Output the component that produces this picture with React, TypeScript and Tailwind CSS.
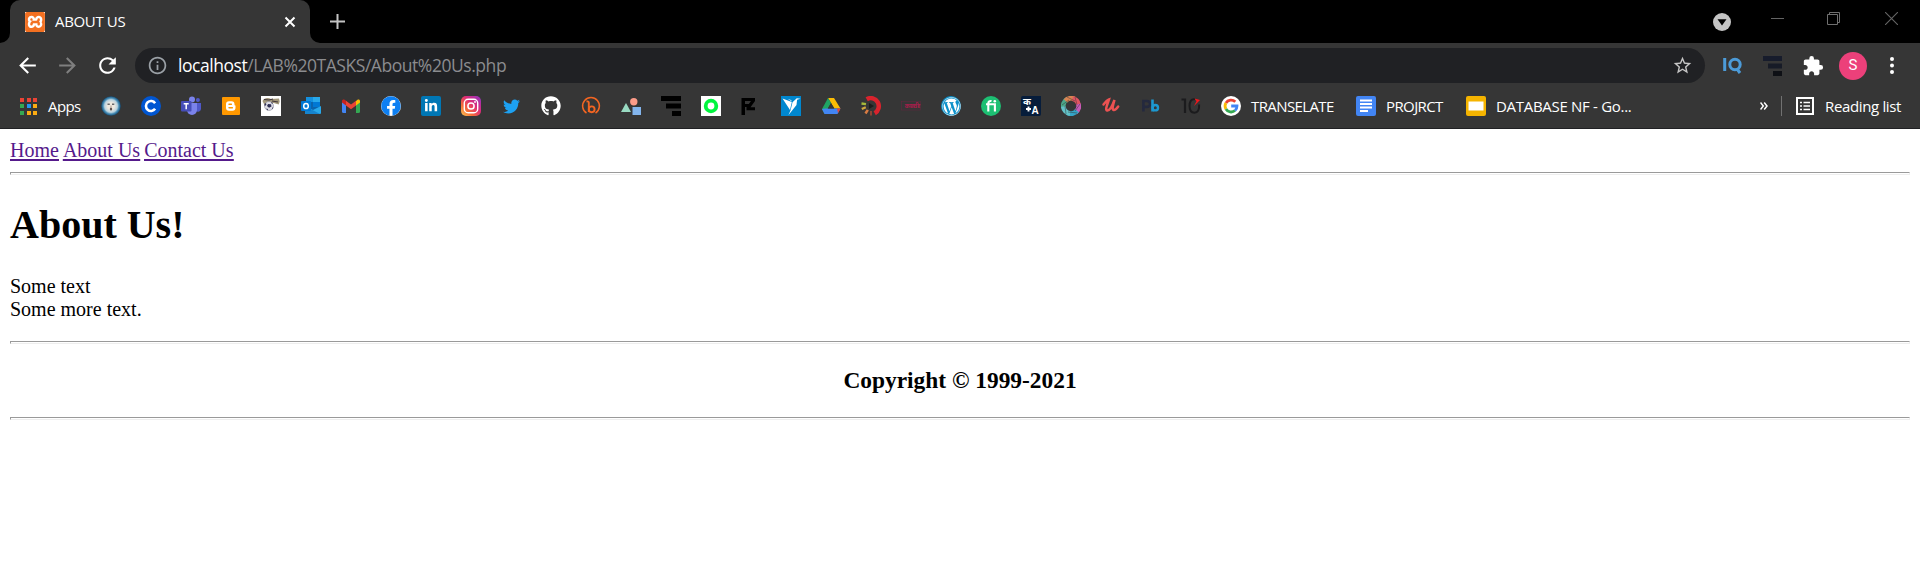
import type { ReactNode } from 'react';
import { FaTwitter, FaGithub, FaFacebook, FaWordpress, FaLinkedinIn } from 'react-icons/fa';
import { MdArrowBack, MdArrowForward, MdRefresh, MdInfoOutline, MdStarBorder, MdExtension } from 'react-icons/md';
import { SiXampp } from 'react-icons/si';

const ui = "font-['Open_Sans',sans-serif]";

function Icon({ children }: { children: ReactNode }) {
  return (
    <svg className="size-5 shrink-0" viewBox="0 0 20 20" fill="none">
      {children}
    </svg>
  );
}

const GoogleMark = () => (
  <Icon>
    <circle cx="10" cy="10" r="10" fill="#fff" />
    <g strokeWidth="2.8">
      <path d="M4.9 7A6 6 0 0 1 14.3 5.8" stroke="#ea4335" />
      <path d="M4.9 13A6 6 0 0 1 4.9 7" stroke="#fbbc05" />
      <path d="M14 14.5A6 6 0 0 1 4.9 13" stroke="#34a853" />
      <path d="M10.2 10H16A6 6 0 0 1 14 14.5" stroke="#4285f4" />
    </g>
  </Icon>
);

function SiteIcons() {
  return (
    <>
      <Icon>
        <defs>
          <radialGradient id="orb">
            <stop offset=".35" stopColor="#eee8df" />
            <stop offset=".65" stopColor="#b9d2df" />
            <stop offset=".8" stopColor="#4d91b8" />
            <stop offset="1" stopColor="#124a73" />
          </radialGradient>
        </defs>
        <circle cx="10" cy="10" r="9.8" fill="url(#orb)" />
        <path d="M6.5 8.2h2.3M11 8.2h2.3" stroke="#65676b" strokeWidth="1.5" />
        <path d="M10 9.5v2" stroke="#b69d8e" />
        <ellipse cx="10" cy="13" rx="1.2" ry="1.5" fill="#5b5150" />
      </Icon>
      <Icon>
        <circle cx="10" cy="10" r="10" fill="#0056d2" />
        <path d="M14.1 7.2A5 5 0 1 0 14.1 12.8" stroke="#fff" strokeWidth="2.6" />
      </Icon>
      <Icon>
        <circle cx="16.9" cy="4" r="2" fill="#5059c9" />
        <path d="M14 7h6v6a3 3 0 0 1-5 2z" fill="#5059c9" />
        <circle cx="11" cy="3.5" r="3" fill="#7b83eb" />
        <path d="M6 7h10v7a5 5 0 0 1-10 0z" fill="#7b83eb" />
        <rect y="5" width="10.5" height="10.5" rx="1" fill="#464eb8" />
        <path d="M2.7 7.8h5M5.2 7.8v5.4" stroke="#fff" strokeWidth="1.5" />
      </Icon>
      <Icon>
        <rect x="1" y="1" width="18" height="18" rx="1" fill="#ff9800" />
        <path d="M8 5.2h2.5a3 3 0 0 1 3 3c0 1 .2 1.2 1 1.3v2.3a3 3 0 0 1-3 3H8a3 3 0 0 1-3-3V8.2a3 3 0 0 1 3-3z" fill="#fff" />
        <path d="M8 8.3h2.4M8 11.7h3.4" stroke="#ff9800" strokeWidth="1.4" strokeLinecap="round" />
      </Icon>
      <Icon>
        <path d="M0 0h20v20H0z" fill="#fff" />
        <path d="M1.500 5C3.500 1.500 7 1.500 10 3l8-.5.7 3-1 3-5-1.500-5 .5-4 2z" fill="#a29779" />
        <path d="M3 3.500l5 .5 4-1M11 5l6 1" stroke="#40353a" strokeWidth="1.100" />
        <circle cx="8" cy="10" r="4.500" fill="#dddde5" stroke="#8b8b9a" strokeWidth=".6" />
        <path d="M7 8l3 .3.5 2.200L8 11.800 6 10zM3.500 8l1.500-1 .4 2-1.700 1zM10 6l2 1-1 1zM5 12.500l2 .5-.2 1.400zM11 12l1.300-1-.8 2.400z" fill="#303055" />
      </Icon>
      <Icon>
        <rect x="5" y="1" width="14" height="13" rx="1" fill="#0a64ad" />
        <path d="M5 1h7v5H5z" fill="#1490df" />
        <path d="M12 1h7v5h-7z" fill="#28a8ea" />
        <path d="M12 6h7v5h-7z" fill="#0078d4" />
        <path d="M4 10l8 4 8-4v7a1 1 0 0 1-1 1H5a1 1 0 0 1-1-1z" fill="#28a8ea" />
        <path d="M4 10l15 8H5a1 1 0 0 1-1-1z" fill="#1684ce" />
        <rect y="5" width="10" height="10" rx="1" fill="#0078d4" />
        <ellipse cx="5" cy="10" rx="2.3" ry="2.6" stroke="#fff" strokeWidth="1.5" />
      </Icon>
      <Icon>
        <path d="M1 5l4 3v9H2.500A1.500 1.500 0 0 1 1 15.500z" fill="#4285f4" />
        <path d="M15 8l4-3v10.500A1.500 1.500 0 0 1 17.500 17H15z" fill="#34a853" />
        <path d="M15 5l1.500-1.200C17.600 3 19 3.700 19 5v1.500L15 9.500z" fill="#fbbc04" />
        <path d="M5 4.800l5 3.800 5-3.800v4.700l-5 3.800-5-3.800z" fill="#ea4335" />
        <path d="M1 5c0-1.300 1.500-2 2.600-1.200L5 4.800v4.700L1 6.500z" fill="#c5221f" />
      </Icon>
      <span className="flex size-5 items-center justify-center rounded-full bg-white">
        <FaFacebook className="size-5 shrink-0 text-[#0d7ff2]" />
      </span>
      <span className="flex size-5 items-center justify-center rounded-[2px] bg-[#0077b5] text-white">
        <FaLinkedinIn className="size-[14px]" />
      </span>
      <Icon>
        <defs>
          <linearGradient id="insta" x1="0" y1="1" x2="1" y2="0">
            <stop stopColor="#fdca55" />
            <stop offset=".3" stopColor="#f56b38" />
            <stop offset=".6" stopColor="#dd2b79" />
            <stop offset="1" stopColor="#8d35c9" />
          </linearGradient>
        </defs>
        <rect width="20" height="20" rx="5" fill="url(#insta)" />
        <rect x="3.300" y="3.300" width="13.400" height="13.400" rx="3.800" stroke="#fff" strokeWidth="1.400" />
        <circle cx="10" cy="10" r="3.100" stroke="#fff" strokeWidth="1.500" />
        <circle cx="14" cy="6" r=".9" fill="#fff" />
      </Icon>
      <span className="flex size-5 items-center justify-center">
        <FaTwitter className="size-[17px] text-[#1da1f2]" />
      </span>
      <FaGithub className="size-5 text-white" />
      <Icon>
        <path d="M5.500 17A8.400 8.400 0 1 1 14.500 17" stroke="#f26522" strokeWidth="1.500" />
        <path d="M5.500 5.500c1.500-.3 2.300 0 2.300 1V16" stroke="#f26522" strokeWidth="1.900" />
        <circle cx="10.700" cy="13.300" r="2.900" stroke="#f26522" strokeWidth="1.900" />
      </Icon>
      <Icon>
        <circle cx="12.800" cy="5.700" r="3.700" fill="#fc9c89" />
        <path d="M5 7l5 9H0z" fill="#99dac2" />
        <path d="M11.500 11h8.500v8h-8.500z" fill="#83b5ed" />
      </Icon>
      <Icon>
        <path d="M0 0h20v5H0zM5 7.500h15v5H5zM11 15h9v5h-9z" fill="#000" />
      </Icon>
      <Icon>
        <path d="M0 0h20v20H0z" fill="#fff" />
        <circle cx="10" cy="10" r="5.300" stroke="#00f53e" strokeWidth="3.800" />
      </Icon>
      <Icon>
        <path d="M.5 2H14v3H4v3h4.500v3H4v8H.5z" fill="#000" />
        <path d="M6 2h8v3l-4.500 6.200H14v3H5.500v-3L10 5H6z" fill="#000" />
      </Icon>
      <Icon>
        <path d="M0 0h20v20H0z" fill="#0087cf" />
        <path d="M1.500 2.500L10.800 6 9 14zM11.500 6.300l4.300-4 3.600.4-3.300 1L15.500 9 7.500 19l2-4.500z" fill="#fff" />
        <path d="M6.500 2.800L11 5.500 10 4z" fill="#fff" />
      </Icon>
      <Icon>
        <path d="M7 2h6l6.500 10.500h-6z" fill="#fbbc04" />
        <path d="M7 2l3 5-6.500 11L1 13z" fill="#1fa463" />
        <path d="M4 12.500h15.500l-3 5.500H3.500l-2.500-5z" fill="#4285f4" />
        <path d="M16 12.500h3.500l-2.500 4.500z" fill="#ea4335" />
        <path d="M10 7l3 5.500H7z" fill="#363636" />
      </Icon>
      <Icon>
        <path d="M5.700 3.200a8 8 0 0 1 8 14" stroke="#d9232d" strokeWidth="4.500" />
        <path d="M.5 7.500l4.500.7" stroke="#a6b93a" strokeWidth="2.300" />
        <path d="M.8 13l4-1.800" stroke="#d2a83e" strokeWidth="2.300" />
        <path d="M4.500 17.500l2.300-3.700" stroke="#d87b42" strokeWidth="2.500" />
        <path d="M10 19.500V15" stroke="#8c4233" strokeWidth="2" />
        <path d="M8 7l5 3-5 3z" fill="#1c1c1c" />
      </Icon>
      <Icon>
        <rect x=".5" y="5.500" width="19" height="8.500" stroke="#672441" strokeWidth=".5" />
        <text x="2.300" y="12.300" fontSize="6" fontWeight="700" textLength="15.500" fill="#a51e4b" className="font-['Noto_Sans',sans-serif]">काज वीर</text>
      </Icon>
      <span className="flex size-5 items-center justify-center rounded-full bg-[#0d91ca] text-white">
        <FaWordpress className="size-[19px]" />
      </span>
      <Icon>
        <circle cx="10" cy="10" r="10" fill="#1dbf73" />
        <path d="M5 8.300h8.900V15.500M7.300 15.500V7.500a2.300 2.300 0 0 1 3.200-2.300" stroke="#fff" strokeWidth="2.100" />
        <circle cx="13.800" cy="5.300" r="1.300" fill="#fff" />
      </Icon>
      <Icon>
        <path d="M2 0h18v18a2 2 0 0 1-2 2H0V2a2 2 0 0 1 2-2z" fill="#071d3b" />
        <text x="2" y="9" fontSize="9.500" fontWeight="700" fill="#fff" className="font-['Noto_Sans',sans-serif]">क</text>
        <text x="10.500" y="17.500" fontSize="10" fontWeight="700" fill="#fff" className="font-['Liberation_Sans',sans-serif]">A</text>
        <path d="M5 13h5M7.500 10.500v5" stroke="#fff" strokeWidth="1.900" />
      </Icon>
      <Icon>
        <g strokeWidth="4.800" fill="none">
          <path d="M2.500 12A7.600 7.600 0 0 1 6 3.400" stroke="#4ba789" />
          <path d="M4.500 4.800A7.600 7.600 0 0 1 13.500 3" stroke="#d98352" />
          <path d="M11.500 2.600A7.600 7.600 0 0 1 17.600 9" stroke="#e15461" />
          <path d="M17.500 8A7.600 7.600 0 0 1 14.500 16.200" stroke="#c85ab7" />
          <path d="M16 14.700A7.600 7.600 0 0 1 7 17" stroke="#34a4c8" />
          <path d="M9 17.600A7.600 7.600 0 0 1 2.400 10.500" stroke="#62c1c7" />
        </g>
        <path d="M1 9l7-5M6 1l8 4M14 1l2 8M19 8l-5 7M16 17l-9-1M5 18l-1-8" stroke="#363636" strokeWidth=".5" />
      </Icon>
      <Icon>
        <path d="M2.500 8.500c2-2.500 4.200-4.500 5.500-5-1 3.500-4.500 10.500-1.800 11C9 15 12 8 13.500 4c-1.500 5-2.800 9.500-.8 10 1.500.3 3.300-1.800 4.500-3.500" stroke="#ec5252" strokeWidth="2.500" strokeLinecap="round" />
      </Icon>
      <Icon>
        <path d="M2.400 15.500V5h3.700a2.900 2.900 0 0 1 0 5.900H2.800" stroke="#24293e" strokeWidth="2.600" />
        <path d="M11.500 3.500v12" stroke="#1d98d0" strokeWidth="2.600" />
        <circle cx="14.300" cy="11.700" r="2.700" stroke="#1d98d0" strokeWidth="2.400" />
      </Icon>
      <Icon>
        <path d="M.5 3.500H4V17" stroke="#1b1b1d" strokeWidth="2.200" />
        <path d="M14 3.300C10 2.500 8.500 6 8.500 10c0 5 2 6.700 5 6.700s5-2.500 4.600-8.200" stroke="#1b1b1d" strokeWidth="2" />
        <path d="M13.500 2.500L19 4l-6 6 2.500-4.800z" fill="#f5161c" />
      </Icon>
      <GoogleMark />
    </>
  );
}

const appColors = ['#ea4335', '#ea4335', '#ea4335', '#34a853', '#2196f3', '#fbab13', '#34a853', '#fbab13', '#fbab13'];

function TabStrip() {
  return (
    <div className="flex h-[43px] bg-black">
      <svg className="mt-[33px] size-[10px]" viewBox="0 0 10 10">
        <path d="M10 0v10H0A10 10 0 0 0 10 0" fill="#363636" />
      </svg>
      <div className="flex h-[43px] w-[300px] items-center rounded-t-[10px] bg-[#363636] pr-[14px] pl-[15px]">
        <span className="flex size-5 items-center justify-center bg-white">
          <SiXampp className="size-5 shrink-0 text-[#f37021]" />
        </span>
        <span className="ml-[10px] pb-[1px] text-[15px] tracking-[-0.35px] text-white">ABOUT US</span>
        <svg className="ml-auto size-3" viewBox="0 0 12 12">
          <path d="M1.500 1.500l9 9M10.500 1.500l-9 9" stroke="#fff" strokeWidth="2" />
        </svg>
      </div>
      <svg className="mt-[33px] size-[10px]" viewBox="0 0 10 10">
        <path d="M0 0v10H10A10 10 0 0 1 0 0" fill="#363636" />
      </svg>
      <svg className="mt-[14px] ml-[10px] size-[15px]" viewBox="0 0 15 15">
        <path d="M0 7.500h15M7.500 0v15" stroke="#c4c4c4" strokeWidth="2" />
      </svg>
      <div className="ml-auto flex pr-[22px]">
        <svg className="mt-[13px] size-[18px]" viewBox="0 0 18 18">
          <circle cx="9" cy="9" r="9" fill="#c4c4c4" />
          <path d="M4.500 6.300h9L9 12.500z" fill="#000" />
        </svg>
        <svg className="mt-[12px] ml-10 h-[13px] w-[13px]" viewBox="0 0 13 13">
          <path d="M0 6.500h13" stroke="#646464" />
        </svg>
        <svg className="mt-[12px] ml-[43px] size-[13px]" viewBox="0 0 13 13" fill="none" stroke="#707070">
          <path d="M.5 2.500h10v10H.5zM2.500 2.500V.500h10v10h-2" />
        </svg>
        <svg className="mt-[12px] ml-[45px] size-[13px]" viewBox="0 0 13 13">
          <path d="M0 0l13 13M13 0L0 13" stroke="#656565" strokeWidth="1.100" />
        </svg>
      </div>
    </div>
  );
}

function Toolbar() {
  return (
    <div className="flex h-[45px] items-center pr-[18px] pl-[15px]">
      <MdArrowBack className="size-[25px] text-white" />
      <MdArrowForward className="ml-[15px] size-[25px] text-[#7f7f7f]" />
      <MdRefresh className="ml-[15px] size-[25px] text-white" />
      <div className="ml-[15px] flex h-[35px] w-[1570px] items-center rounded-full bg-[#202124] pr-[12px] pl-[12px] text-[17.500px]">
        <MdInfoOutline className="size-[21px] text-[#9aa0a6]" />
        <span className="ml-[10px] pb-[1px] tracking-[-0.450px] whitespace-nowrap text-[#8b8c8f]">
          <span className="text-white">localhost</span>/LAB%20TASKS/About%20Us.php
        </span>
        <MdStarBorder className="ml-auto size-[21px] text-[#c6c6c6]" />
      </div>
      <svg className="ml-[18px] h-[18px] w-[19px]" viewBox="0 0 19 18" fill="none" stroke="#4c9bd8" strokeWidth="3">
        <path d="M1.700 1v13M14 12l3 4" />
        <circle cx="12" cy="7.500" r="5.200" />
      </svg>
      <svg className="ml-[21px] size-5" viewBox="0 0 20 20">
        <path d="M0 0h19v5H0z" fill="#171c2c" />
        <path d="M5 7.500h14v5H5z" fill="#171b27" />
        <path d="M10 15h9v5h-9z" fill="#0e1015" />
      </svg>
      <MdExtension className="ml-[19px] size-[22px] text-white" />
      <span className="ml-[15px] flex size-7 items-center justify-center rounded-full bg-[#ec407a] font-['Roboto',sans-serif] text-[15px] text-white">S</span>
      <svg className="ml-[23px] h-[17px] w-1" viewBox="0 0 4 17" fill="#fff">
        <circle cx="2" cy="2" r="2" />
        <circle cx="2" cy="8.500" r="2" />
        <circle cx="2" cy="15" r="2" />
      </svg>
    </div>
  );
}

function Bookmarks() {
  return (
    <div className="flex h-[40px] items-center pr-[17px] pb-1 pl-5 text-[15px] whitespace-nowrap text-white">
      <div className="grid grid-cols-[repeat(3,4px)] gap-[2.500px]">
        {appColors.map((color, i) => (
          <span key={i} className="size-1" style={{ backgroundColor: color }} />
        ))}
      </div>
      <span className="ml-[11px] w-[53px] tracking-[-0.6px]">Apps</span>
      <div className="flex items-center gap-5">
        <SiteIcons />
      </div>
      <span className="ml-[10px] w-[105px] tracking-[-0.6px]">TRANSELATE</span>
      <Icon>
        <rect width="20" height="20" rx="2" fill="#4285f4" />
        <path d="M4 4.500h12M4 8h12M4 11.500h12M4 15h8" stroke="#fff" strokeWidth="1.800" />
      </Icon>
      <span className="ml-[10px] w-[80px] tracking-[-0.6px]">PROJRCT</span>
      <Icon>
        <rect width="20" height="20" rx="2" fill="#f5b400" />
        <path d="M2.500 5.500h15v9h-15z" fill="#fff" />
      </Icon>
      <span className="ml-[10px] tracking-[-0.3px]">DATABASE NF - Go...</span>
      <svg className="ml-auto h-2 w-[8px]" viewBox="0 0 8 8" fill="none" stroke="#fff" strokeWidth="1.500">
        <path d="M.5.5L3.300 4 .5 7.500M4.200.5L7 4 4.200 7.500" />
      </svg>
      <span className="ml-[13px] h-5 w-px bg-[#717171]" />
      <svg className="ml-[14px] size-[18px]" viewBox="0 0 18 18" fill="none" stroke="#fff">
        <path d="M1 1h16v16H1z" strokeWidth="2" />
        <path d="M4 5.500h2M7.500 5.500H14M4 9h2M7.500 9H14M4 12.500h2M7.500 12.500H14" strokeWidth="1.500" />
      </svg>
      <span className="ml-[11px] w-[78px] tracking-[-0.35px]">Reading list</span>
    </div>
  );
}

const Rule = () => <hr className="h-[3px] border border-t-[#9a9a9a] border-r-[#eee] border-b-[#eee] border-l-[#9a9a9a]" />;

export default function App() {
  return (
    <div className="flex h-[580px] w-[1920px] flex-col overflow-hidden bg-white">
      <header className={`bg-[#363636] ${ui}`}>
        <TabStrip />
        <Toolbar />
        <Bookmarks />
        <div className="h-px bg-[#202124]" />
      </header>
      <main className="px-[10px] pt-[10px] font-['Liberation_Serif',serif] text-[20px] leading-[23px] text-black">
        <nav className="mb-[10px] flex gap-1 text-[#551a8b] underline decoration-2 underline-offset-2">
          <a href="#home">Home</a>
          <a href="#about">About Us</a>
          <a href="#contact">Contact Us</a>
        </nav>
        <Rule />
        <h1 className="mt-[27px] text-[40px] leading-[46px] font-bold">About Us!</h1>
        <p className="mt-[27px]">
          Some text
          <br />
          Some more text.
        </p>
        <div className="mt-5">
          <Rule />
        </div>
        <h3 className="my-[23px] text-center text-[23.400px] leading-[27px] font-bold">Copyright © 1999-2021</h3>
        <Rule />
      </main>
    </div>
  );
}
